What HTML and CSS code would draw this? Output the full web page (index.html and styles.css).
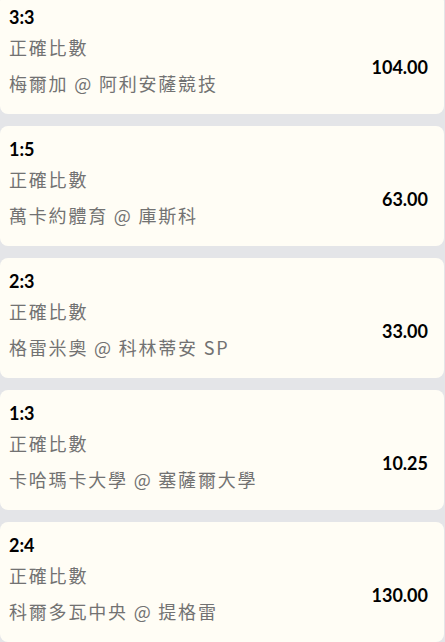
FILE: index.html
```html
<!DOCTYPE html>
<html lang="zh-Hant">
<head>
<meta charset="utf-8">
<link rel="stylesheet" href="styles.css">
</head>
<body>
<div class="list">
  <div class="card">
    <div class="info">
      <div class="score">3:3</div>
      <div class="market">正確比數</div>
      <div class="match">梅爾加 @ 阿利安薩競技</div>
    </div>
    <div class="odds">104.00</div>
  </div>
  <div class="card">
    <div class="info">
      <div class="score">1:5</div>
      <div class="market">正確比數</div>
      <div class="match">萬卡約體育 @ 庫斯科</div>
    </div>
    <div class="odds">63.00</div>
  </div>
  <div class="card">
    <div class="info">
      <div class="score">2:3</div>
      <div class="market">正確比數</div>
      <div class="match">格雷米奧 @ 科林蒂安 SP</div>
    </div>
    <div class="odds">33.00</div>
  </div>
  <div class="card">
    <div class="info">
      <div class="score">1:3</div>
      <div class="market">正確比數</div>
      <div class="match">卡哈瑪卡大學 @ 塞薩爾大學</div>
    </div>
    <div class="odds">10.25</div>
  </div>
  <div class="card">
    <div class="info">
      <div class="score">2:4</div>
      <div class="market">正確比數</div>
      <div class="match">科爾多瓦中央 @ 提格雷</div>
    </div>
    <div class="odds">130.00</div>
  </div>
</div>
</body>
</html>
```

FILE: styles.css
```css
html, body {
  margin: 0;
  padding: 0;
  background: #e4e5e8;
}

.list {
  display: flex;
  flex-direction: column;
  gap: 12px;
  margin-top: -6px;
  padding-right: 1px;
}

.card {
  box-sizing: border-box;
  height: 120px;
  background: #fffdf5;
  border-radius: 8px;
  padding: 11px 16px 0 9px;
  display: flex;
  justify-content: space-between;
}

.info {
  display: flex;
  flex-direction: column;
}

.score {
  font-family: Lato, "Liberation Sans", sans-serif;
  font-weight: 700;
  font-size: 18px;
  line-height: 24px;
  color: #000;
}

.market,
.match {
  font-family: "Noto Sans CJK TC", "Noto Sans", sans-serif;
  font-size: 18px;
  line-height: 36px;
  letter-spacing: 1.8px;
  color: #727272;
  white-space: nowrap;
}

.odds {
  align-self: center;
  margin-top: 14px;
  font-family: Lato, "Liberation Sans", sans-serif;
  font-weight: 700;
  font-size: 18px;
  line-height: 24px;
  color: #000;
}
```
